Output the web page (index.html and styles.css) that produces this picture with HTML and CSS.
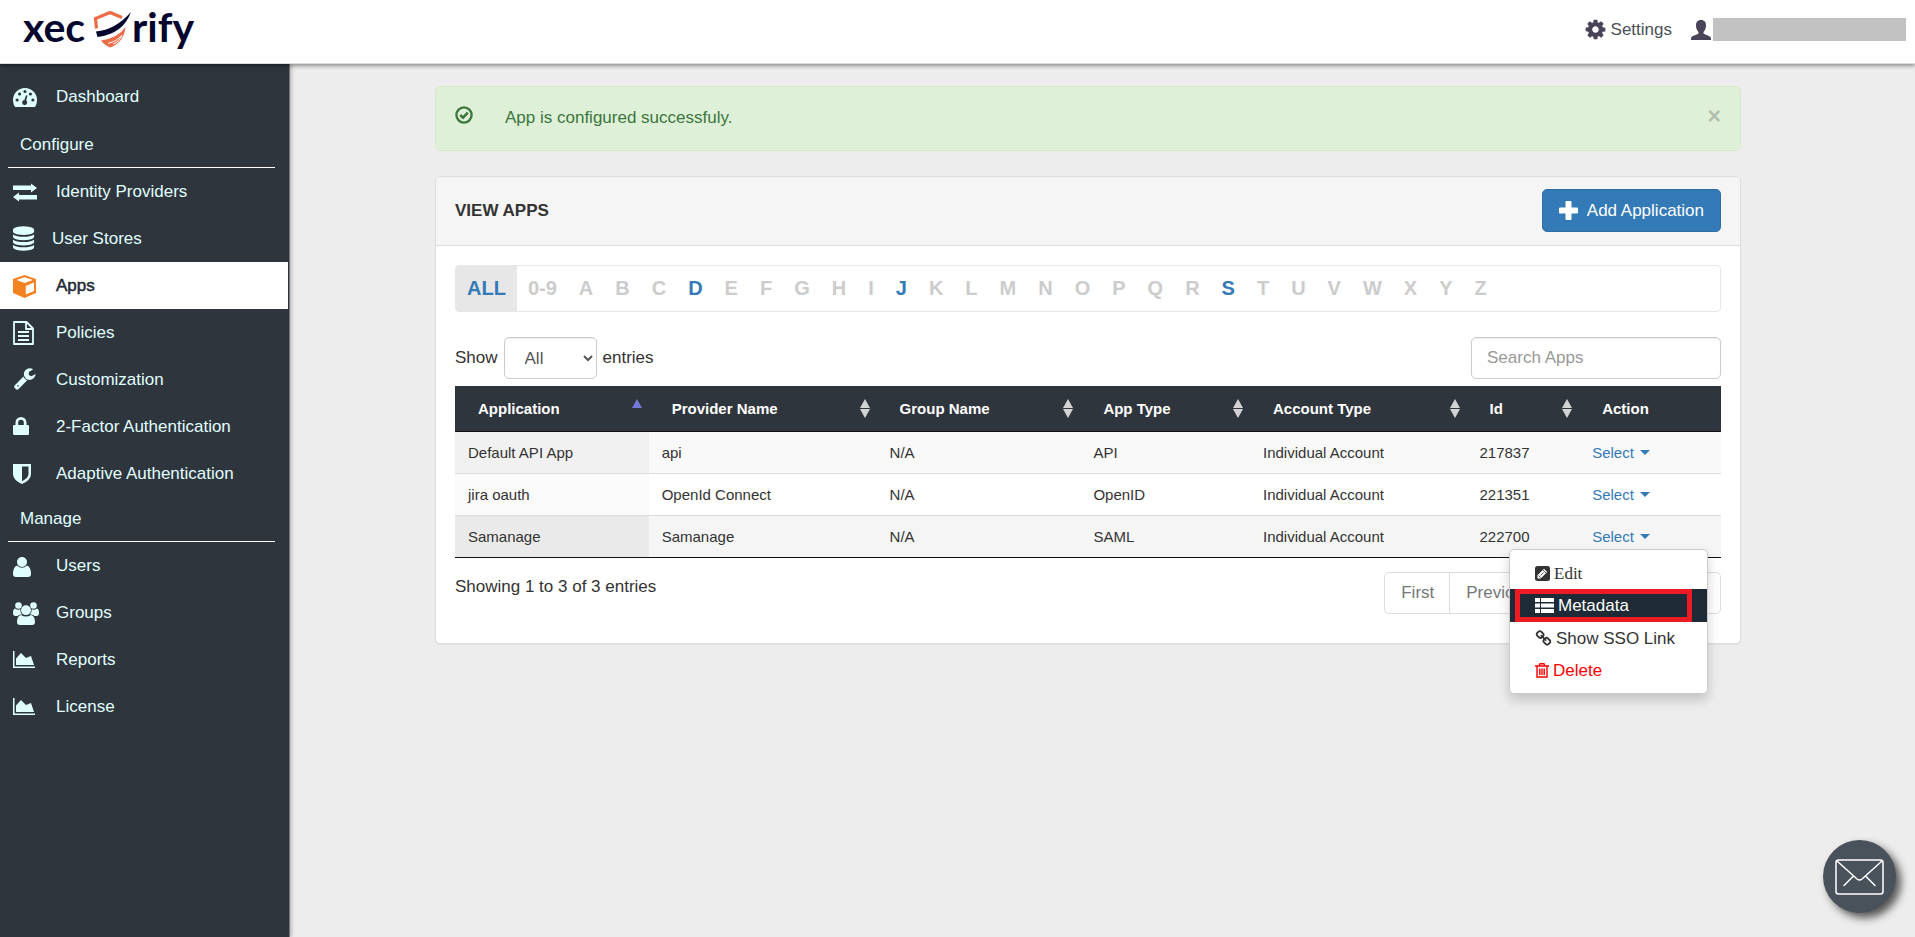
FILE: index.html
```html
<!DOCTYPE html>
<html lang="en">
<head>
  <meta charset="UTF-8" />
  <meta name="viewport" content="width=device-width, initial-scale=1" />
  <title>View Apps</title>
  <link rel="stylesheet" href="styles.css">
</head>
<body>
  <header class="topbar">
    <a href="#" class="logo" aria-label="xecurify">
      <svg width="176" height="56" viewBox="0 0 176 56">
        <text class="logo-text" x="0" y="42">xec</text>
        <path d="M73.500 28.500 72.500 18.500 87 12.500 99 17.500" fill="none" stroke="#ee6b47" stroke-width="3.200" />
        <path d="M73 31.500Q92 30 108 12 100 34 74.500 37Z" fill="#05062d" />
        <path d="M78 40.500Q95 38 102.500 27 101 42 87.500 47.500 81 45 78 40.500Z" fill="#ee6b47" />
        <path d="M85 43.500Q93 42 99 35.500 96 42 90 44" fill="none" stroke="#fff" stroke-width="1" />
        <text class="logo-text" x="109" y="42">rify</text>
      </svg>
    </a>
    <nav class="top-links">
      <a href="#" class="top-link">
        <svg width="23" height="23" viewBox="0 0 1792 1792"><path d="M1152 896q0-106-75-181t-181-75-181 75-75 181 75 181 181 75 181-75 75-181zm512-109v222q0 12-8 23t-20 13l-185 28q-19 54-39 91 35 50 107 138 10 12 10 25t-9 23q-27 37-99 108t-94 71q-12 0-26-9l-138-108q-44 23-91 38-16 136-29 186-7 28-36 28h-222q-14 0-24.500-8.500t-11.500-21.500l-28-184q-49-16-90-37l-141 107q-10 9-25 9-14 0-25-11-126-114-165-168-7-10-7-23 0-12 8-23 15-21 51-66.500t54-70.500q-27-50-41-99l-183-27q-13-2-21-12.500t-8-23.500v-222q0-12 8-23t19-13l186-28q14-46 39-92-40-57-107-138-10-12-10-24 0-10 9-23 26-36 98.500-107.500t94.500-71.500q13 0 26 10l138 107q44-23 91-38 16-136 29-186 7-28 36-28h222q14 0 24.500 8.500t11.500 21.500l28 184q49 16 90 37l142-107q9-9 24-9 13 0 25 10 129 119 165 170 7 8 7 22 0 12-8 23-15 21-51 66.500t-54 70.500q26 50 41 98l183 28q13 2 21 12.500t8 23.500z" /></svg>
        Settings
      </a>
      <a href="#" class="top-link account" aria-label="Account">
        <svg width="20" height="20" viewBox="0 0 20 20"><path d="M10 0C6.500 0 5 2.300 5 5.500 5 8.500 6 10.500 7.500 12V13.500C6 15 0 15.500 0 18.500V20H20V18.500C20 15.500 14 15 12.500 13.500V12C14 10.500 15 8.500 15 5.500 15 2.300 13.500 0 10 0Z" /></svg>
        <span class="account-name"></span>
      </a>
    </nav>
  </header>

  <div class="layout">
    <aside class="sidebar">
      <ul class="menu menu-top">
        <li><a href="#"><svg width="26" height="26" viewBox="0 1 26 26"><path fill-rule="evenodd" d="M0 17A12 12 0 0 1 24 17Q24 21 22 24H2Q0 21 0 17ZM2.500 17a1.600 1.600 0 1 0 3.200 0 1.600 1.600 0 1 0-3.200 0M5 11a1.600 1.600 0 1 0 3.200 0 1.600 1.600 0 1 0-3.200 0M10.400 8.500a1.600 1.600 0 1 0 3.200 0 1.600 1.600 0 1 0-3.200 0M15.800 11a1.600 1.600 0 1 0 3.200 0 1.600 1.600 0 1 0-3.200 0M18.300 17a1.600 1.600 0 1 0 3.200 0 1.600 1.600 0 1 0-3.200 0M13 12.300 11.400 17A2.500 2.500 0 1 0 13.200 17.500L14.500 12.500Z" /></svg>Dashboard</a></li>
      </ul>
      <h2 class="menu-title">Configure</h2>
      <ul class="menu">
        <li><a href="#"><svg width="26" height="26" viewBox="0 1 26 26"><path d="M0 7.500H18V5.500L24 10 18 14.500V12H0ZM24 21.500H6V23.500L0 19 6 14.500V17H24Z" /></svg>Identity Providers</a></li>
        <li><a href="#"><svg width="22" height="25" viewBox="128 0 1600 1792"><path d="M896 768q237 0 443-43t325-127v170q0 69-103 128t-280 93.500-385 34.500-385-34.500-280-93.500-103-128v-170q119 84 325 127t443 43zm0 768q237 0 443-43t325-127v170q0 69-103 128t-280 93.500-385 34.500-385-34.500-280-93.500-103-128v-170q119 84 325 127t443 43zm0-384q237 0 443-43t325-127v170q0 69-103 128t-280 93.500-385 34.500-385-34.500-280-93.500-103-128v-170q119 84 325 127t443 43zm0-1152q208 0 385 34.500t280 93.500 103 128v128q0 69-103 128t-280 93.500-385 34.500-385-34.500-280-93.500-103-128v-128q0-69 103-128t280-93.500 385-34.500z" /></svg>User Stores</a></li>
        <li><a href="#" class="active"><svg width="26" height="26" viewBox="0 1 26 26"><path fill-rule="evenodd" d="M11.500 3 23 7V21L11.500 26 0 21V7ZM3.500 8 11.500 11 20 8 11.500 5.200ZM12.800 14V22.500L21 19V10.500Z" /></svg>Apps</a></li>
        <li><a href="#"><svg width="26" height="26" viewBox="0 1 26 26"><path d="M1 3H13.500L20 9.500V25H1ZM13 3V10H20M5 13H16M5 17H16M5 21H16" fill="none" stroke="currentColor" stroke-width="1.800" stroke-linejoin="round" /></svg>Policies</a></li>
        <li><a href="#"><svg width="26" height="26" viewBox="0 80 2000 1900"><path d="M448 1472q0-26-19-45t-45-19-45 19-19 45 19 45 45 19 45-19 19-45zm644-420l-682 682q-37 37-90 37-52 0-91-37l-106-108q-38-36-38-90 0-53 38-91l681-681q39 98 114.500 173.500t173.500 114.500zm634-435q0 39-23 106-47 134-164.500 217.500t-258.500 83.500q-185 0-316.500-131.500t-131.500-316.500 131.500-316.500 316.500-131.500q58 0 121.500 16.500t107.500 46.500q16 11 16 28t-16 28l-293 169v224l193 107q5-3 79-48.500t135.500-81 70.500-35.500q15 0 23.500 10t8.500 25z" /></svg>Customization</a></li>
        <li><a href="#"><svg width="26" height="26" viewBox="0 1 26 26"><path fill-rule="evenodd" d="M1.200 12H2.500V9.500A5.500 5.500 0 0 1 13.500 9.500V12H14.800Q16 12 16 13.200V20.800Q16 22 14.800 22H1.200Q0 22 0 20.800V13.200Q0 12 1.200 12ZM5.200 12H10.800V9.500A2.800 2.800 0 0 0 5.200 9.500Z" /></svg>2-Factor Authentication</a></li>
        <li><a href="#"><svg width="26" height="26" viewBox="0 1 26 26"><path fill-rule="evenodd" d="M0 4H18V14Q18 20 9 24 0 20 0 14ZM9 6.500V21.200Q15.500 18 15.500 14V6.500Z" /></svg>Adaptive Authentication</a></li>
      </ul>
      <h2 class="menu-title">Manage</h2>
      <ul class="menu">
        <li><a href="#"><svg width="26" height="26" viewBox="0 1 26 26"><circle cx="9" cy="10" r="5" /><path d="M4 13.500Q9 18 14 13.500 18 15 18 22 18 25 15 25H3Q0 25 0 22 0 15 4 13.500Z" /></svg>Users</a></li>
        <li><a href="#"><svg width="26" height="26" viewBox="0 1 26 26"><circle cx="5.500" cy="6.500" r="3.300" /><circle cx="20.500" cy="6.500" r="3.300" /><circle cx="13" cy="11.200" r="4.900" /><path d="M2 9.500Q5 11.500 7.300 10.300 7 14 9 15.500 6 15 4.500 17H2.500Q0 17 0 14 0 10 2 9.500ZM24 9.500Q21 11.500 18.700 10.300 19 14 17 15.500 20 15 21.500 17H23.500Q26 17 26 14 26 10 24 9.500ZM8 16Q13 19 18 16 22 17 22 23 22 26 19 26H7Q4 26 4 23 4 17 8 16Z" /></svg>Groups</a></li>
        <li><a href="#"><svg width="26" height="26" viewBox="0 1 26 26"><path d="M0 5H1.500V20.500H22V22H0ZM3 19V12.500L8 7 13 12 18 10 21 19Z" /></svg>Reports</a></li>
        <li><a href="#"><svg width="26" height="26" viewBox="0 1 26 26"><path d="M0 5H1.500V20.500H22V22H0ZM3 19V12.500L8 7 13 12 18 10 21 19Z" /></svg>License</a></li>
      </ul>
    </aside>

    <main class="content">
      <div class="alert" role="alert">
        <svg width="18" height="18" viewBox="0 0 18 18"><circle cx="9" cy="9" r="7.600" fill="none" stroke="currentColor" stroke-width="2.300" /><path d="M5.200 9 8 11.600 12.800 6.600" fill="none" stroke="currentColor" stroke-width="2.600" /></svg>
        <span class="alert-text">App is configured successfuly.</span>
        <button type="button" class="close" aria-label="Close">&times;</button>
      </div>

      <section class="panel">
        <div class="panel-heading">
          <h1>VIEW APPS</h1>
          <button type="button" class="btn-add">
            <svg width="19" height="19" viewBox="0 0 19 19"><path d="M7 0.500H12V7H18.500V12H12V18.500H7V12H0.500V7H7Z" fill="#fff" stroke="#fff" stroke-linejoin="round" /></svg>
            Add Application
          </button>
        </div>
        <div class="panel-body">
          <nav class="letters">
            <a href="#" class="on current">ALL</a>
            <a href="#">0-9</a>
            <a href="#">A</a>
            <a href="#">B</a>
            <a href="#">C</a>
            <a href="#" class="on">D</a>
            <a href="#">E</a>
            <a href="#">F</a>
            <a href="#">G</a>
            <a href="#">H</a>
            <a href="#">I</a>
            <a href="#" class="on">J</a>
            <a href="#">K</a>
            <a href="#">L</a>
            <a href="#">M</a>
            <a href="#">N</a>
            <a href="#">O</a>
            <a href="#">P</a>
            <a href="#">Q</a>
            <a href="#">R</a>
            <a href="#" class="on">S</a>
            <a href="#">T</a>
            <a href="#">U</a>
            <a href="#">V</a>
            <a href="#">W</a>
            <a href="#">X</a>
            <a href="#">Y</a>
            <a href="#">Z</a>
          </nav>

          <div class="table-tools">
            <label class="length">Show
              <select>
                <option>10</option>
                <option>25</option>
                <option selected>All</option>
              </select>
              entries
            </label>
            <input type="search" class="search" placeholder="Search Apps" aria-label="Search Apps" />
          </div>

          <table class="apps">
            <colgroup>
              <col class="col-app" />
              <col class="col-provider" />
              <col class="col-group" />
              <col class="col-type" />
              <col class="col-account" />
              <col class="col-id" />
              <col />
            </colgroup>
            <thead>
              <tr>
                <th><div class="th">Application <span class="sort asc"></span></div></th>
                <th><div class="th">Provider Name <span class="sort"></span></div></th>
                <th><div class="th">Group Name <span class="sort"></span></div></th>
                <th><div class="th">App Type <span class="sort"></span></div></th>
                <th><div class="th">Account Type <span class="sort"></span></div></th>
                <th><div class="th">Id <span class="sort"></span></div></th>
                <th><div class="th">Action</div></th>
              </tr>
            </thead>
            <tbody>
              <tr>
                <td>Default API App</td>
                <td>api</td>
                <td>N/A</td>
                <td>API</td>
                <td>Individual Account</td>
                <td>217837</td>
                <td><button type="button" class="select-link">Select</button></td>
              </tr>
              <tr>
                <td>jira oauth</td>
                <td>OpenId Connect</td>
                <td>N/A</td>
                <td>OpenID</td>
                <td>Individual Account</td>
                <td>221351</td>
                <td><button type="button" class="select-link">Select</button></td>
              </tr>
              <tr class="hovered">
                <td>Samanage</td>
                <td>Samanage</td>
                <td>N/A</td>
                <td>SAML</td>
                <td>Individual Account</td>
                <td>222700</td>
                <td>
                  <div class="dropdown">
                    <button type="button" class="select-link" aria-expanded="true">Select</button>
                    <div class="dropdown-menu">
                      <a href="#" class="edit"><svg width="15" height="15" viewBox="0 0 15 15"><rect width="15" height="15" rx="2.500" /><path d="M2.500 12.500V9.300L9 2.800 12.200 6 5.700 12.500Z" fill="#fff" /><path d="M3.500 9.500 5.600 11.600M8 4 11 7M5.500 9.500 8.500 6.500" stroke="#333" stroke-width="0.800" /></svg>Edit</a>
                      <a href="#" class="marked"><svg width="19" height="15" viewBox="0 0 19 15"><path d="M0 0H5V4H0ZM6 0H19V4H6ZM0 5.500H5V9.500H0ZM6 5.500H19V9.500H6ZM0 11H5V15H0ZM6 11H19V15H6Z" /></svg>Metadata</a>
                      <a href="#"><svg width="17" height="17" viewBox="0 0 1792 1792"><path d="M1520 1216q0-40-28-68l-208-208q-28-28-68-28-42 0-72 32 3 3 19 18.500t21.500 21.500 15 19 13 25.500 3.500 27.500q0 40-28 68t-68 28q-15 0-27.500-3.500t-25.500-13-19-15-21.500-21.500-18.500-19q-33 31-33 73 0 40 28 68l206 207q27 27 68 27 40 0 68-26l147-146q28-28 28-67zm-703-705q0-40-28-68l-206-207q-28-28-68-28-39 0-68 27l-147 146q-28 28-28 67 0 40 28 68l208 208q27 27 68 27 42 0 72-31-3-3-19-18.500t-21.500-21.500-15-19-13-25.500-3.500-27.500q0-40 28-68t68-28q15 0 27.500 3.500t25.500 13 19 15 21.500 21.500 18.500 19q33-31 33-73zm895 705q0 120-85 203l-147 146q-83 83-203 83-121 0-204-85l-206-207q-83-83-83-203 0-123 88-209l-88-88q-86 88-208 88-120 0-204-84l-208-208q-84-84-84-204t85-203l147-146q83-83 203-83 121 0 204 85l206 207q83 83 83 203 0 123-88 209l88 88q86-88 208-88 120 0 204 84l208 208q84 84 84 204z" /></svg>Show SSO Link</a>
                      <a href="#" class="delete"><svg width="14" height="15" viewBox="0 0 14 15"><path d="M0 3H14M4 3 5 0.800H9L10 3M2 3V14H12V3M4.800 5.500V12M7 5.500V12M9.200 5.500V12" fill="none" stroke="currentColor" stroke-width="1.400" /></svg>Delete</a>
                    </div>
                  </div>
                </td>
              </tr>
            </tbody>
          </table>

          <div class="table-footer">
            <span>Showing 1 to 3 of 3 entries</span>
            <nav class="pages">
              <a href="#">First</a>
              <a href="#">Previous</a>
              <a href="#">1</a>
              <a href="#">Next</a>
              <a href="#">Last</a>
            </nav>
          </div>
        </div>
      </section>
    </main>
  </div>

  <button type="button" class="contact" aria-label="Contact us">
    <svg width="49" height="36" viewBox="0 0 49 36"><rect x="1" y="1" width="47" height="34" rx="2.500" /><path d="M2 2 22 20Q24.500 22 27 20L47 2M18 17.500 9 26.500M31 17.500 40 26.500" /></svg>
  </button>
</body>
</html>
```
FILE: styles.css
```css
* {
  box-sizing: border-box;
}

body {
  margin: 0;
  min-height: 100vh;
  display: flex;
  flex-direction: column;
  font-family: "Liberation Sans", Arial, sans-serif;
  font-size: 17px;
  line-height: 24px;
  color: #333;
  background: #ededed;
}

a {
  color: inherit;
  text-decoration: none;
}

button,
input,
select {
  font: inherit;
}

button {
  cursor: pointer;
}

svg {
  display: block;
  flex: none;
  fill: currentColor;
}

/* Header */
.topbar {
  display: flex;
  justify-content: space-between;
  align-items: center;
  height: 64px;
  padding: 0 9px 0 23px;
  background: #fff;
  border-bottom: 1px solid #ddd;
  box-shadow: 0 2px 4px rgba(0, 0, 0, 0.4);
  position: relative;
  z-index: 2;
}

.logo {
  align-self: flex-start;
}

.logo-text {
  font-family: Lato, sans-serif;
  font-size: 41px;
  font-weight: 700;
  fill: #05062d;
}

.top-links {
  display: flex;
  align-items: center;
  gap: 19px;
  padding-bottom: 4px;
}

.top-link {
  display: flex;
  align-items: center;
  gap: 4px;
  color: #4a5058;
}

.top-link svg {
  fill: #4a4459;
}

.account {
  gap: 2px;
}

.account-name {
  width: 193px;
  height: 23px;
  background: #c2c2c2;
}

/* Sidebar */
.layout {
  display: flex;
  flex: 1;
}

.sidebar {
  width: 290px;
  flex: none;
  padding-top: 9px;
  background: #2f353d;
  border-right: 1px solid #777;
  box-shadow: 1px 0 4px rgba(0, 0, 0, 0.3);
  color: #e0ffff;
}

.menu {
  list-style: none;
  margin: 0;
  padding: 0 1px 0 0;
}

.menu-top {
  padding-bottom: 3px;
}

.menu a {
  display: flex;
  align-items: center;
  gap: 17px;
  height: 47px;
  padding: 0 13px;
}

.menu .active {
  background: #fff;
  color: #1e2a38;
  -webkit-text-stroke: 0.5px #1e2a38;
}

.menu .active svg {
  fill: #f58220;
}

.menu-title {
  margin: 0 14px 0 8px;
  padding: 10px 12px;
  border-bottom: 1px solid #fff;
  font-size: 17px;
  font-weight: 400;
}

/* Content */
.content {
  flex: 1;
  min-width: 0;
  padding: 22px 174px 40px 145px;
}

.alert {
  display: flex;
  align-items: flex-start;
  min-height: 65px;
  margin-bottom: 25px;
  padding: 19px;
  background: #dff0d8;
  border: 1px solid #d6e9c6;
  border-radius: 5px;
  color: #3c763d;
}

.alert-text {
  flex: 1;
  padding-left: 32px;
}

.close {
  padding: 0;
  border: 0;
  background: none;
  font-size: 23px;
  font-weight: 700;
  line-height: 20px;
  color: #000;
  opacity: 0.2;
}

.panel {
  background: #fff;
  border: 1px solid #ddd;
  border-radius: 5px;
  box-shadow: 0 1px 1px rgba(0, 0, 0, 0.05);
}

.panel-heading {
  display: flex;
  justify-content: space-between;
  align-items: center;
  padding: 12px 19px 13px;
  background: #f5f5f5;
  border-bottom: 1px solid #ddd;
  border-radius: 4px 4px 0 0;
}

.panel-heading h1 {
  margin: 0;
  font-size: 17px;
}

.btn-add {
  display: flex;
  align-items: center;
  gap: 9px;
  height: 43px;
  padding: 0 16px;
  border: 1px solid #2e6da4;
  border-radius: 5px;
  background: #337ab7;
  color: #fff;
}

.panel-body {
  padding: 19px 19px 29px;
}

/* Alphabet filter */
.letters {
  display: flex;
  margin-bottom: 25px;
  border: 1px solid #e7e7e7;
  border-radius: 4px;
  font-size: 20px;
  font-weight: 700;
  color: #ccc;
}

.letters a {
  padding: 10px 11px 11px;
}

.letters .on {
  color: #337ab7;
}

.letters .current {
  background: #e7e7e7;
}

.table-tools {
  display: flex;
  justify-content: space-between;
  align-items: center;
  margin-bottom: 7px;
}

.length {
  display: flex;
  align-items: center;
  gap: 6px;
}

.length select,
.search {
  height: 42px;
  border: 1px solid #ccc;
  border-radius: 5px;
  background: #fff;
  box-shadow: inset 0 1px 1px rgba(0, 0, 0, 0.075);
  color: #555;
}

.length select {
  width: 93px;
  padding: 0 16px;
}

.search {
  width: 250px;
  padding: 0 15px;
}

.search::placeholder {
  color: #999;
}

/* Apps table */
.apps {
  width: 100%;
  table-layout: fixed;
  border-collapse: separate;
  border-spacing: 0;
  border-bottom: 1px solid #111;
  font-size: 15px;
  line-height: 21px;
}

.col-app {
  width: 15.3%;
}

.col-provider {
  width: 18%;
}

.col-group {
  width: 16.1%;
}

.col-type {
  width: 13.4%;
}

.col-account {
  width: 17.1%;
}

.col-id {
  width: 8.9%;
}

.apps th {
  padding: 12px 7px 12px 23px;
  background: #2f353d;
  border-bottom: 1px solid #111;
  color: #fff;
  text-align: left;
}

.th {
  display: flex;
  justify-content: space-between;
  align-items: center;
}

.sort {
  display: flex;
  flex-direction: column;
  gap: 1px;
}

.sort::before,
.sort::after {
  content: "";
  border: 5px solid transparent;
  border-top-width: 0;
  border-bottom: 9px solid #d3d3d3;
}

.sort::after {
  border-bottom-width: 0;
  border-bottom-color: transparent;
  border-top: 9px solid #d3d3d3;
}

.sort.asc::before {
  border-bottom-color: #7679d6;
}

.sort.asc::after {
  border-top-color: transparent;
}

.apps td {
  padding: 10px 13px;
  border-top: 1px solid #ddd;
}

.apps tbody tr:first-child td {
  border-top: 0;
}

.apps tbody tr:nth-child(odd) {
  background: #f9f9f9;
}

.apps tbody tr:nth-child(odd) td:first-child {
  background: #f1f1f1;
}

.apps tbody tr:nth-child(even) td:first-child {
  background: #fafafa;
}

.apps tbody tr.hovered {
  background: #f5f5f5;
}

.apps tbody tr.hovered td:first-child {
  background: #eaeaea;
}

.select-link {
  display: flex;
  align-items: center;
  gap: 6px;
  padding: 0;
  border: 0;
  background: none;
  color: #337ab7;
}

.select-link::after {
  content: "";
  border: 5px solid transparent;
  border-top-color: #337ab7;
  border-bottom: 0;
}

/* Action menu */
.dropdown {
  position: relative;
}

.dropdown-menu {
  position: absolute;
  top: 100%;
  right: 0;
  z-index: 1;
  width: 199px;
  margin-top: 2px;
  padding: 7px 0;
  background: #fff;
  border: 1px solid #ccc;
  border-radius: 5px;
  box-shadow: 0 6px 12px rgba(0, 0, 0, 0.18);
  font-size: 17px;
}

.dropdown-menu a {
  display: flex;
  align-items: center;
  gap: 4px;
  height: 32px;
  padding: 0 25px;
}

.dropdown-menu .edit {
  font-family: "Liberation Serif", "Times New Roman", serif;
}

.dropdown-menu .marked {
  position: relative;
  height: 33px;
  background: #1e2a35;
  color: #fff;
}

.marked::after {
  content: "";
  position: absolute;
  inset: 0 15px 0 5px;
  border: 5px solid #ed1c24;
}

.dropdown-menu .delete {
  color: #f00;
}

/* Footer of the table */
.table-footer {
  display: flex;
  justify-content: space-between;
  align-items: flex-start;
  padding-top: 14px;
  line-height: 30px;
}

.pages {
  display: flex;
  border: 1px solid #ddd;
  border-radius: 5px;
  line-height: 40px;
  color: #777;
}

.pages a {
  padding: 0 15px 0 16px;
  border-left: 1px solid #ddd;
}

.pages a:first-child {
  border-left: 0;
}

/* Contact bubble */
.contact {
  position: fixed;
  right: 19px;
  bottom: 24px;
  display: grid;
  place-items: center;
  width: 73px;
  height: 73px;
  padding: 0;
  border: 0;
  border-radius: 50%;
  background: #49515b;
  box-shadow: 5px 5px 8px #555;
}

.contact svg {
  fill: none;
  stroke: #fff;
  stroke-width: 1.5px;
  stroke-linecap: round;
}
```
